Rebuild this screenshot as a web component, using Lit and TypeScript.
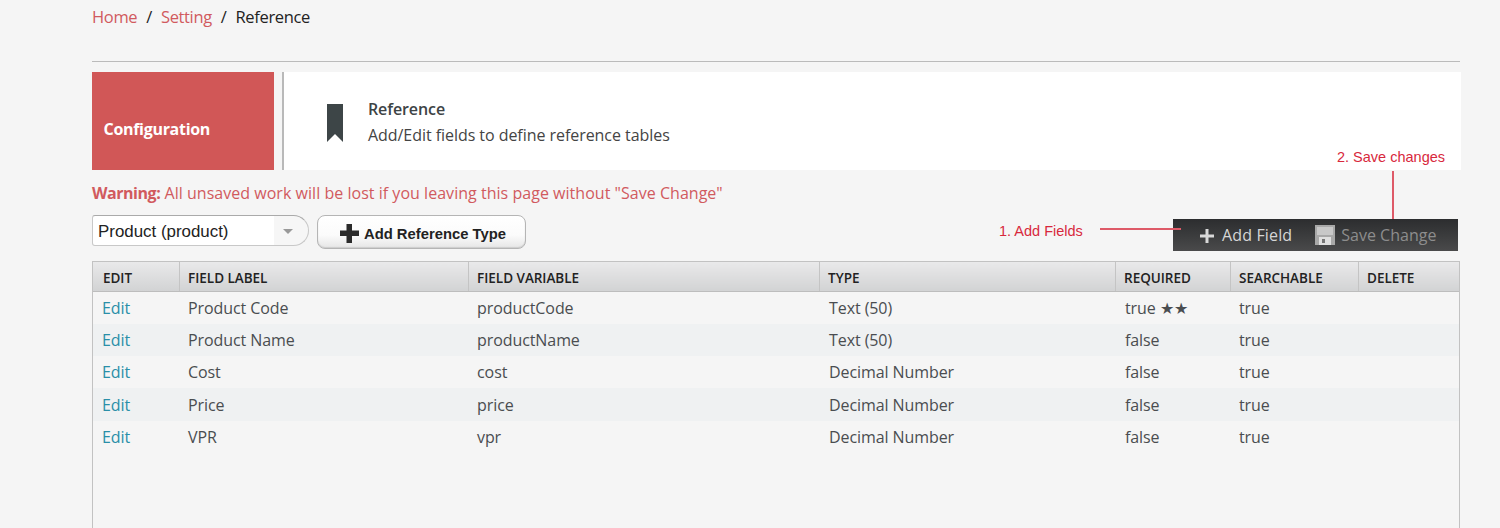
import { LitElement, html, css } from "lit";
import { customElement } from "lit/decorators.js";

const columns = [
  { label: "EDIT", width: 86 },
  { label: "FIELD LABEL", width: 289 },
  { label: "FIELD VARIABLE", width: 351 },
  { label: "TYPE", width: 296 },
  { label: "REQUIRED", width: 115 },
  { label: "SEARCHABLE", width: 128 },
  { label: "DELETE", width: 101 },
];

const rows = [
  ["Product Code", "productCode", "Text (50)", "true ★★", "true"],
  ["Product Name", "productName", "Text (50)", "false", "true"],
  ["Cost", "cost", "Decimal Number", "false", "true"],
  ["Price", "price", "Decimal Number", "false", "true"],
  ["VPR", "vpr", "Decimal Number", "false", "true"],
];

@customElement("app-root")
export class AppRoot extends LitElement {
  static styles = css`
    :host {
      display: block;
      height: 528px;
      overflow: hidden;
      background: #f5f5f5;
      font-family: "Open Sans", "Noto Sans", sans-serif;
      color: #444;
    }

    .page {
      position: relative;
      width: 1369px;
      margin-left: 92px;
    }

    .breadcrumb {
      display: flex;
      gap: 9px;
      height: 62px;
      margin-right: 1px;
      padding-top: 6px;
      box-sizing: border-box;
      border-bottom: 1px solid #bbb;
      font-size: 16.5px;
      line-height: 22px;
      letter-spacing: -0.35px;
      color: #222;
    }

    .breadcrumb a {
      color: #d15a5e;
    }

    .header {
      display: flex;
      height: 98px;
      margin-top: 10px;
    }

    .config {
      width: 182px;
      padding: 46px 0 0 11.5px;
      box-sizing: border-box;
      background: #d15757;
      color: #fff;
      font-size: 16px;
      line-height: 22px;
      font-weight: 700;
      letter-spacing: -0.3px;
    }

    .info {
      flex: 1;
      display: flex;
      align-items: center;
      margin-left: 8px;
      padding-top: 2px;
      box-sizing: border-box;
      border-left: 2px solid #b9b9b9;
      background: #fff;
    }

    .bookmark {
      margin: 2px 24px 0 42px;
      width: 18px;
      height: 40px;
    }

    .title {
      font-size: 16px;
      line-height: 26px;
      font-weight: 600;
      letter-spacing: -0.1px;
      color: #3d4345;
    }

    .desc {
      font-size: 16px;
      line-height: 26px;
      letter-spacing: -0.05px;
      color: #444;
    }

    .warning {
      margin-top: 12px;
      font-size: 16px;
      line-height: 22px;
      letter-spacing: 0.03px;
      color: #d15a5e;
    }

    .warning b {
      font-weight: 700;
      letter-spacing: -0.45px;
    }

    .toolbar {
      display: flex;
      justify-content: space-between;
      align-items: flex-start;
      height: 46px;
      margin-top: 11px;
    }

    .left {
      display: flex;
      gap: 8px;
    }

    .select {
      display: flex;
      align-items: center;
      justify-content: space-between;
      width: 217px;
      height: 31px;
      padding: 2px 6px 0 5px;
      box-sizing: border-box;
      border: 1px solid #c8c8c8;
      border-top-color: #aaa;
      border-radius: 3px 16px 16px 3px;
      background: linear-gradient(to right, #fff 0, #fff 84%, #f6f6f6 84%);
      font-family: "Liberation Sans", Arial, sans-serif;
      font-size: 16.9px;
      color: #222;
    }

    .caret {
      width: 0;
      height: 0;
      margin-right: 9px;
      border-left: 5px solid transparent;
      border-right: 5px solid transparent;
      border-top: 5px solid #999;
    }

    .add-type {
      display: flex;
      align-items: center;
      gap: 4px;
      width: 209px;
      height: 34px;
      padding: 3px 0 0 21px;
      box-sizing: border-box;
      border: 1px solid #b5b5b5;
      border-radius: 8px;
      background: linear-gradient(to bottom, #fff 0, #fbfbfb 60%, #e6e6e6 100%);
      box-shadow: inset 0 -1px 1px #ccc;
      font-family: "Liberation Sans", Arial, sans-serif;
      font-size: 14.8px;
      font-weight: 700;
      color: #222;
    }

    .actions {
      display: flex;
      align-items: center;
      width: 285px;
      height: 32px;
      margin: 4px 3px 0 0;
      padding-left: 26px;
      box-sizing: border-box;
      background: linear-gradient(to bottom, #2c2d2f 0, #3c3d3e 55%, #4a4a4b 100%);
      font-size: 16px;
    }

    .act {
      display: flex;
      align-items: center;
      color: #d6d6d6;
    }

    .act.plus {
      gap: 7px;
      margin-right: 23px;
      letter-spacing: 0.15px;
    }

    .act.plus svg {
      margin-top: 2px;
    }

    .act.save {
      gap: 6px;
      color: #8d8d8d;
    }

    .grid {
      height: 270px;
      width: 1368px;
      border: 1px solid #c2c2c2;
      border-bottom: 0;
      box-sizing: border-box;
    }

    table {
      border-collapse: collapse;
      table-layout: fixed;
      width: 1366px;
    }

    th {
      height: 29px;
      padding: 4px 0 0 8.6px;
      box-sizing: border-box;
      border-left: 1px solid #c4c4c4;
      border-bottom: 1px solid #bdbdbd;
      background: linear-gradient(to bottom, #e9e9ea 0, #d2d3d4 100%);
      text-align: left;
      font-size: 13.5px;
      font-weight: 600;
      letter-spacing: -0.03px;
      color: #222;
    }

    th:first-child {
      padding-left: 10px;
      border-left: 0;
    }

    td {
      height: 32.3px;
      padding: 0 0 0 9px;
      font-size: 16px;
      letter-spacing: -0.08px;
      color: #4a4d50;
    }

    td:nth-child(4),
    td:nth-child(5) {
      padding-left: 10px;
    }

    tr:nth-child(even) td {
      background: #eff1f2;
    }

    td:first-child {
      color: #2a8fa8;
    }

    .note {
      position: absolute;
      font-family: "Liberation Sans", Arial, sans-serif;
      font-size: 14.5px;
      line-height: 16px;
      color: #d8283c;
    }

    .note.save {
      left: 1245px;
      top: 149px;
    }

    .note.add {
      left: 907px;
      top: 223px;
    }

    .rule {
      position: absolute;
      background: #de5a68;
    }

    .rule.save {
      left: 1300px;
      top: 171px;
      width: 2px;
      height: 48px;
    }

    .rule.add {
      left: 1008px;
      top: 228px;
      width: 81px;
      height: 2px;
    }
  `;

  render() {
    return html`
      <div class="page">
        <nav class="breadcrumb">
          <a>Home</a><span>/</span><a>Setting</a><span>/</span><span>Reference</span>
        </nav>

        <section class="header">
          <div class="config">Configuration</div>
          <div class="info">
            <svg class="bookmark" viewBox="0 0 18 40">
              <path d="M1 1H17V39L9 31L1 39Z" fill="#3d4547" />
            </svg>
            <div>
              <div class="title">Reference</div>
              <div class="desc">Add/Edit fields to define reference tables</div>
            </div>
          </div>
        </section>

        <div class="warning">
          <b>Warning:</b> All unsaved work will be lost if you leaving this page without "Save Change"
        </div>

        <div class="toolbar">
          <div class="left">
            <div class="select"><span>Product (product)</span><i class="caret"></i></div>
            <div class="add-type">
              <svg width="21" height="21" viewBox="0 0 21 21">
                <path d="M7.5 1H13V7.5H20V13H13V20H7.5V13H1V7.5H7.5Z" fill="#2b2b2b" />
              </svg>
              Add Reference Type
            </div>
          </div>
          <div class="actions">
            <div class="act plus">
              <svg width="16" height="16" viewBox="0 0 16 16">
                <path d="M6.5 1H9.5V6.5H15V9.5H9.5V15H6.5V9.5H1V6.5H6.5Z" fill="#d8d8d8" />
              </svg>
              Add Field
            </div>
            <div class="act save">
              <svg width="20" height="20" viewBox="0 0 20 20">
                <path d="M0 0H20V20H0Z" fill="#a8a8a8" />
                <path d="M2 2H18V10H2Z" fill="#c8c8c8" />
                <path d="M4 12H16V20H4Z" fill="#e0e0e0" />
                <path d="M7 14H10V18H7Z" fill="#777" />
              </svg>
              Save Change
            </div>
          </div>
        </div>

        <div class="grid">
          <table>
            <colgroup>
              ${columns.map((c) => html`<col style="width:${c.width}px" />`)}
            </colgroup>
            <thead>
              <tr>${columns.map((c) => html`<th>${c.label}</th>`)}</tr>
            </thead>
            <tbody>
              ${rows.map(
                (r) => html`
                  <tr>
                    <td>Edit</td>
                    ${r.map((v) => html`<td>${v}</td>`)}
                    <td></td>
                  </tr>
                `
              )}
            </tbody>
          </table>
        </div>

        <span class="note save">2. Save changes</span>
        <i class="rule save"></i>
        <span class="note add">1. Add Fields</span>
        <i class="rule add"></i>
      </div>
    `;
  }
}
